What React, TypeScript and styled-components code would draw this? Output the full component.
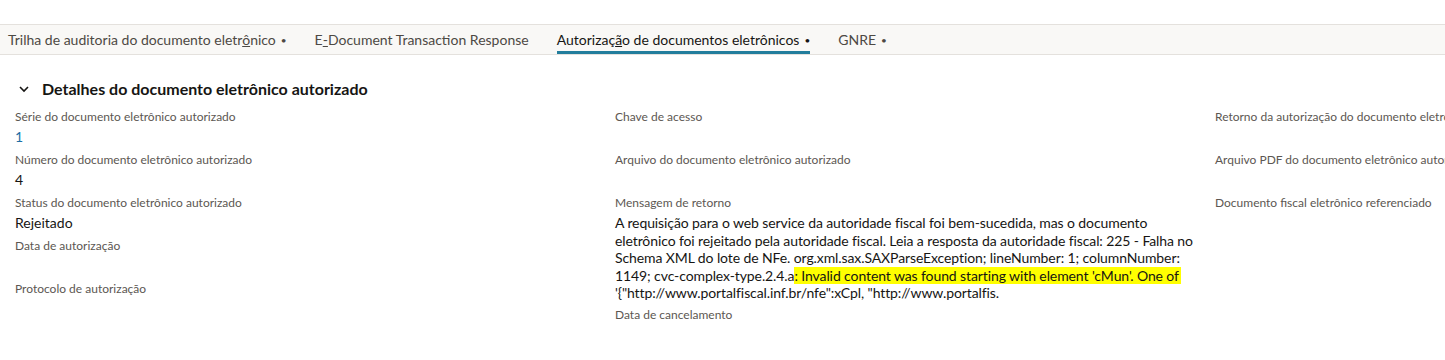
import React from 'react';
import styled, { createGlobalStyle } from 'styled-components';

const GlobalStyle = createGlobalStyle`
  body {
    margin: 0;
    background: #ffffff;
    font-family: Lato, "Noto Sans", sans-serif;
    color: #161513;
  }
`;

const Page = styled.div`
  width: 1445px;
  height: 360px;
  overflow: hidden;
  padding-top: 24px;
  box-sizing: border-box;
`;

const TabBar = styled.nav`
  display: flex;
  gap: 28px;
  height: 31px;
  padding-left: 8px;
  background: #f9f8f6;
  border-top: 1px solid #e4e1dd;
  border-bottom: 1px solid #e4e1dd;
  box-sizing: border-box;
`;

const Tab = styled.div<{ $active?: boolean }>`
  display: flex;
  align-items: center;
  height: 100%;
  font-size: 14px;
  color: ${p => (p.$active ? '#161513' : '#4d4944')};
  border-bottom: 3px solid ${p => (p.$active ? '#227d9c' : 'transparent')};
  box-sizing: border-box;
  padding-top: 3px;
  white-space: nowrap;
`;

const Dot = styled.span`
  margin-left: 5px;
  font-size: 10px;
`;

const Section = styled.section`
  padding: 24px 0 0 15px;
`;

const SectionHeader = styled.h2`
  display: flex;
  align-items: center;
  gap: 12px;
  margin: 0 0 9px 3px;
  font-size: 16px;
  font-weight: 700;
  color: #161513;
`;

const Columns = styled.div`
  display: grid;
  grid-template-columns: 600px 600px 600px;
`;

const Column = styled.div`
  display: flex;
  flex-direction: column;
`;

const Field = styled.div`
  display: flex;
  flex-direction: column;
  min-height: 43px;
`;

const Label = styled.div`
  font-size: 12px;
  line-height: 20px;
  color: #5c5752;
  white-space: nowrap;
`;

const Value = styled.div<{ $link?: boolean }>`
  font-size: 14px;
  line-height: 17.5px;
  color: ${p => (p.$link ? '#1d6fa5' : '#161513')};
  padding-top: 1px;
  padding-bottom: 3px;
`;

const Line = styled.div`
  white-space: nowrap;
  letter-spacing: -0.1px;
`;

const Highlight = styled.mark`
  background: #ffff00;
  color: inherit;
  padding-right: 2px;
`;

const Chevron = () => (
  <svg width="12" height="12" viewBox="0 0 12 12" fill="none">
    <path d="M2 4l4 4 4-4" stroke="#161513" strokeWidth="1.6" />
  </svg>
);

const message = [
  'A requisição para o web service da autoridade fiscal foi bem-sucedida, mas o documento',
  'eletrônico foi rejeitado pela autoridade fiscal. Leia a resposta da autoridade fiscal: 225 - Falha no',
  'Schema XML do lote de NFe. org.xml.sax.SAXParseException; lineNumber: 1; columnNumber:',
];

export default function App() {
  return (
    <Page>
      <GlobalStyle />
      <TabBar>
        <Tab>
          <span>
            Trilha de auditoria do documento eletr<u>ô</u>nico
          </span>
          <Dot>•</Dot>
        </Tab>
        <Tab>
          <span>
            E<u>-</u>Document Transaction Response
          </span>
        </Tab>
        <Tab $active>
          <span>
            Autorizaç<u>ã</u>o de documentos eletrônicos
          </span>
          <Dot>•</Dot>
        </Tab>
        <Tab>
          <span>GNRE</span>
          <Dot>•</Dot>
        </Tab>
      </TabBar>
      <Section>
        <SectionHeader>
          <Chevron />
          Detalhes do documento eletrônico autorizado
        </SectionHeader>
        <Columns>
          <Column>
            <Field>
              <Label>Série do documento eletrônico autorizado</Label>
              <Value $link>1</Value>
            </Field>
            <Field>
              <Label>Número do documento eletrônico autorizado</Label>
              <Value>4</Value>
            </Field>
            <Field>
              <Label>Status do documento eletrônico autorizado</Label>
              <Value>Rejeitado</Value>
            </Field>
            <Field>
              <Label>Data de autorização</Label>
            </Field>
            <Field>
              <Label>Protocolo de autorização</Label>
            </Field>
          </Column>
          <Column>
            <Field>
              <Label>Chave de acesso</Label>
            </Field>
            <Field>
              <Label>Arquivo do documento eletrônico autorizado</Label>
            </Field>
            <Field>
              <Label>Mensagem de retorno</Label>
              <Value>
                {message.map(l => (
                  <Line key={l}>{l}</Line>
                ))}
                <Line>
                  1149; cvc-complex-type.2.4.a
                  <Highlight>: Invalid content was found starting with element 'cMun'. One of</Highlight>
                </Line>
                <Line>'{'{'}"http://www.portalfiscal.inf.br/nfe":xCpl, "http://www.portalfis.</Line>
              </Value>
            </Field>
            <Field>
              <Label>Data de cancelamento</Label>
            </Field>
          </Column>
          <Column>
            <Field>
              <Label>Retorno da autorização do documento eletrônico autorizado</Label>
            </Field>
            <Field>
              <Label>Arquivo PDF do documento eletrônico autorizado</Label>
            </Field>
            <Field>
              <Label>Documento fiscal eletrônico referenciado</Label>
            </Field>
          </Column>
        </Columns>
      </Section>
    </Page>
  );
}
